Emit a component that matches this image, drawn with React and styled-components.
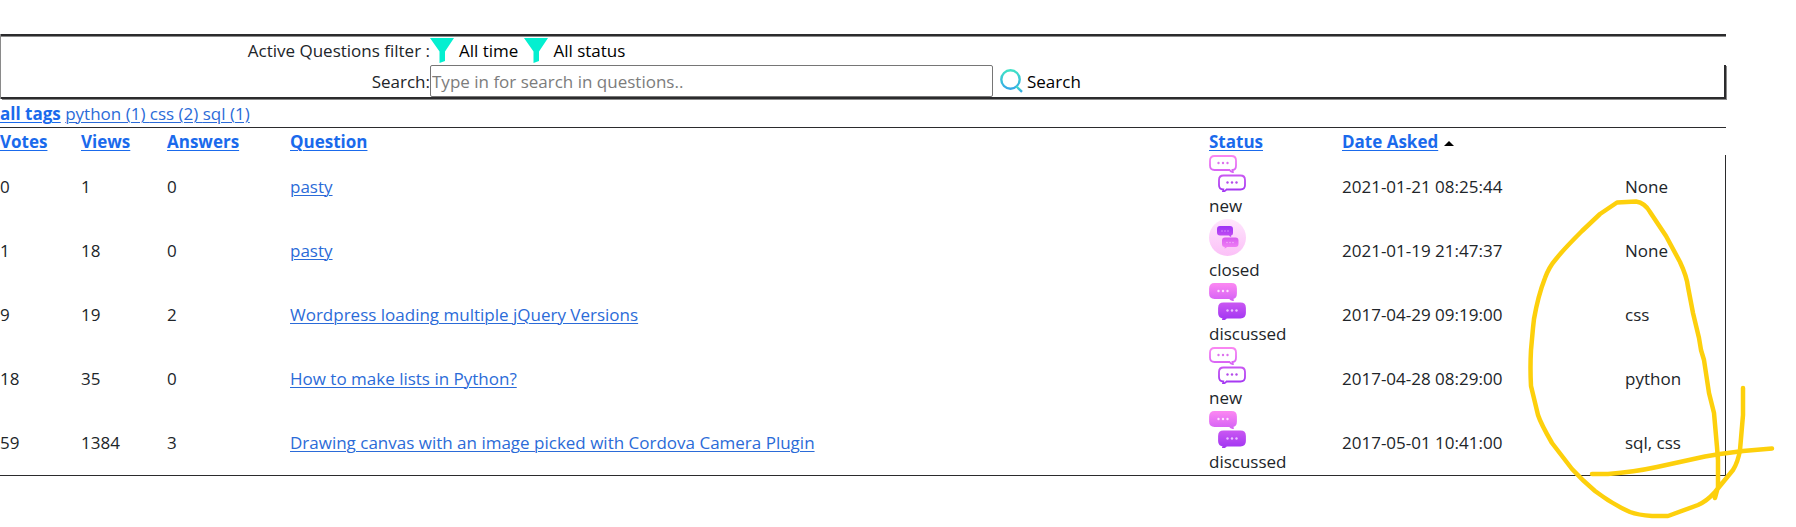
import React from "react";
import styled, { createGlobalStyle } from "styled-components";

const INK = "#2b2b2d";
const EDGE = "#8a8a8a";

const GlobalStyle = createGlobalStyle`
  *, *::before, *::after { box-sizing: border-box; }
  body {
    margin: 0;
    background: #fff;
    color: #212529;
    font: 17px/27px "Open Sans", "Noto Sans", sans-serif;
  }
`;

const Page = styled.main`
  position: relative;
  padding: 34px 70px 50px 0;
  overflow: hidden;
`;

const FilterPanel = styled.form`
  border-left: 1px solid ${EDGE};
`;

const FilterRow = styled.div`
  display: flex;
  align-items: center;
  height: 31px;
  padding: 1px 0 2px;
  border-top: 2px solid ${INK};
  box-shadow: inset 0 1px ${EDGE};
`;

const SearchRow = styled.div`
  display: flex;
  align-items: center;
  border-bottom: 2px solid ${INK};
  border-right: 2px solid ${INK};
  box-shadow: 1px 1px ${EDGE};
`;

const RowLabel = styled.label`
  flex: none;
  width: 429px;
  text-align: right;
`;

const PlainButton = styled.button`
  display: inline-flex;
  align-items: center;
  gap: ${(p) => p.$gap}px;
  margin: 0 6px 0 0;
  padding: 0;
  border: 0;
  background: none;
  color: #000;
  font: inherit;
`;

const SearchInput = styled.input`
  width: 563px;
  height: 32px;
  margin-right: 7px;
  padding: 0 1px;
  border: 1px solid #767676;
  border-radius: 2px;
  font: inherit;
  &::placeholder { color: #7c7c7c; opacity: 1; }
`;

const Link = styled.a`
  color: ${(p) => (p.$bold ? "#1a6aec" : "#2b6bd8")};
  font-weight: ${(p) => (p.$bold ? 700 : 400)};
  text-decoration: underline;
  text-decoration-thickness: 1px;
  text-underline-offset: 2px;
`;

const TagBar = styled.nav`
  padding-top: 1px;
  border-bottom: 1px solid ${INK};
`;

const Table = styled.table`
  width: 100%;
  table-layout: fixed;
  border-collapse: separate;
  border-spacing: 0;
  border-bottom: 1px solid ${INK};
`;

const Col = styled.col`
  width: ${(p) => (p.$width ? `${p.$width}px` : "auto")};
`;

const HeadCell = styled.th`
  height: 27px;
  padding: 0;
  text-align: left;
  white-space: nowrap;
`;

const Cell = styled.td`
  height: 64px;
  padding: ${(p) => (p.$flush ? "0" : "0 0 2px")};
  vertical-align: middle;
  &:last-child { border-right: 1px solid ${INK}; }
`;

const StatusIcon = styled.svg`
  display: block;
  width: 37px;
  height: 37px;
`;

const SortArrow = styled.svg`
  margin-left: 6px;
  vertical-align: middle;
`;

const Annotation = styled.svg`
  position: absolute;
  top: 0;
  right: 0;
  pointer-events: none;
`;

const Funnel = () => (
  <svg width="24" height="25" viewBox="0 0 24 25" aria-hidden="true">
    <path d="M0 0h24L15 13.5V23l-5.500 2V13.500z" fill="#04efd0" />
  </svg>
);

const Magnifier = () => (
  <svg width="23" height="24" viewBox="0 0 23 24" aria-hidden="true">
    <g fill="none" stroke="url(#lens)" strokeWidth="2.400">
      <circle cx="10.500" cy="10.500" r="9.200" />
      <path d="M16.500 17.500l5.500 5.300" />
    </g>
  </svg>
);

const UPPER = "M5.500 1h17Q27 1 27 5.500v5Q27 15 23.500 15l.3 2q-2-.2-3.300-2h-15Q1 15 1 10.500v-5Q1 1 5.500 1z";
const LOWER = "M14.500 20.500h17Q36 20.500 36 25v5Q36 34.500 31.500 34.500h-14q-1.500 1.800-3.500 2l.3-2Q10 34.500 10 30v-5Q10 20.500 14.500 20.500z";

const Dots = ({ x, y, fill }) => (
  <g fill={fill}>
    {[0, 4.5, 9].map((d) => (
      <circle key={d} cx={x + d} cy={y} r="1.200" />
    ))}
  </g>
);

const Bubbles = ({ solid }) => (
  <>
    <path d={UPPER} fill={solid ? "url(#pink)" : "#fff"} stroke="url(#pink)" strokeWidth="1.800" />
    <path d={LOWER} fill={solid ? "url(#violet)" : "#fff"} stroke="url(#violet)" strokeWidth="1.800" />
    <Dots x={9.5} y={8} fill={solid ? "#fde0ff" : "#dd72ee"} />
    <Dots x={18.5} y={27.5} fill={solid ? "#eabfff" : "#b44bea"} />
  </>
);

const ClosedDrawing = () => (
  <>
    <circle cx="18.500" cy="18.500" r="18.500" fill="url(#disc)" />
    <path d="M11 7h10q3 0 3 3v3.500q0 3-2 3l.2 1.500q-1.500-.2-2.200-1.500h-9q-3 0-3-3V10q0-3 3-3z" fill="url(#violet2)" />
    <path d="M16 18.500h10.500q3 0 3 3V25q0 3-3 3H18q-1 1.200-2.500 1.400l.3-1.400q-2.800 0-2.800-3v-3.500q0-3 3-3z" fill="url(#pink2)" />
    <g fill="#e3a2fb">
      <circle cx="13" cy="12" r=".7" /><circle cx="16" cy="12" r=".7" /><circle cx="19" cy="12" r=".7" />
    </g>
    <g fill="#f4b6fa">
      <circle cx="18" cy="23.500" r=".7" /><circle cx="21" cy="23.500" r=".7" /><circle cx="24" cy="23.500" r=".7" />
    </g>
  </>
);

const Gradient = ({ id, from, to }) => (
  <linearGradient id={id} x1="0" y1="0" x2="0" y2="1">
    <stop offset="0" stopColor={from} />
    <stop offset="1" stopColor={to} />
  </linearGradient>
);

const GradientDefs = () => (
  <Annotation width="0" height="0" aria-hidden="true">
    <defs>
      <Gradient id="pink" from="#fa86f2" to="#d662f5" />
      <Gradient id="violet" from="#c856f2" to="#a236f2" />
      <Gradient id="violet2" from="#9d32f5" to="#c44ff2" />
      <Gradient id="pink2" from="#d65cf0" to="#f381f5" />
      <Gradient id="disc" from="#ffe6fd" to="#fbc0f7" />
      <Gradient id="lens" from="#40e2c6" to="#35a9e6" />
    </defs>
  </Annotation>
);

const Status = ({ value }) => (
  <>
    <StatusIcon viewBox="0 0 37 37" aria-hidden="true">
      {value === "closed" ? <ClosedDrawing /> : <Bubbles solid={value === "discussed"} />}
    </StatusIcon>
    {value}
  </>
);

const columns = [
  { title: "Votes", width: 81 },
  { title: "Views", width: 86 },
  { title: "Answers", width: 123 },
  { title: "Question" },
  { title: "Status", width: 133 },
  { title: "Date Asked", width: 283, sorted: true },
  { title: "", width: 101 },
];

const questions = [
  { votes: 0, views: 1, answers: 0, title: "pasty", status: "new", date: "2021-01-21 08:25:44", tags: "None" },
  { votes: 1, views: 18, answers: 0, title: "pasty", status: "closed", date: "2021-01-19 21:47:37", tags: "None" },
  { votes: 9, views: 19, answers: 2, title: "Wordpress loading multiple jQuery Versions", status: "discussed", date: "2017-04-29 09:19:00", tags: "css" },
  { votes: 18, views: 35, answers: 0, title: "How to make lists in Python?", status: "new", date: "2017-04-28 08:29:00", tags: "python" },
  { votes: 59, views: 1384, answers: 3, title: "Drawing canvas with an image picked with Cordova Camera Plugin", status: "discussed", date: "2017-05-01 10:41:00", tags: "sql, css" },
];

export default function App() {
  return (
    <Page>
      <GlobalStyle />
      <GradientDefs />
      <FilterPanel onSubmit={(e) => e.preventDefault()}>
        <FilterRow>
          <RowLabel htmlFor="time-filter">Active Questions filter :</RowLabel>
          <PlainButton id="time-filter" type="button" $gap={5}><Funnel />All time</PlainButton>
          <PlainButton type="button" $gap={5}><Funnel />All status</PlainButton>
        </FilterRow>
        <SearchRow>
          <RowLabel htmlFor="search">Search:</RowLabel>
          <SearchInput id="search" type="text" placeholder="Type in for search in questions.." />
          <PlainButton type="submit" $gap={4}><Magnifier />Search</PlainButton>
        </SearchRow>
      </FilterPanel>
      <TagBar>
        <Link href="#all" $bold>all tags</Link>{" "}
        <Link href="#python">python (1) </Link>
        <Link href="#css">css (2) </Link>
        <Link href="#sql">sql (1)</Link>
      </TagBar>
      <Table>
        <colgroup>
          {columns.map((c) => <Col key={c.title} $width={c.width} />)}
        </colgroup>
        <thead>
          <tr>
            {columns.map((c) => (
              <HeadCell key={c.title} scope="col">
                {c.title && <Link href="#sort" $bold>{c.title}</Link>}
                {c.sorted && (
                  <SortArrow width="10" height="5" viewBox="0 0 10 5" aria-hidden="true">
                    <path d="M0 5L5 0l5 5z" />
                  </SortArrow>
                )}
              </HeadCell>
            ))}
          </tr>
        </thead>
        <tbody>
          {questions.map((q) => (
            <tr key={q.date}>
              <Cell>{q.votes}</Cell>
              <Cell>{q.views}</Cell>
              <Cell>{q.answers}</Cell>
              <Cell><Link href="#question">{q.title}</Link></Cell>
              <Cell $flush><Status value={q.status} /></Cell>
              <Cell>{q.date}</Cell>
              <Cell>{q.tags}</Cell>
            </tr>
          ))}
        </tbody>
      </Table>
      <Annotation width="296" height="527" viewBox="0 0 296 527" aria-hidden="true">
        <g fill="none" stroke="#fdd00c" strokeWidth="4.500" strokeLinecap="round" strokeLinejoin="round">
          <path d="M243 388V415L240 450Q238 462 233 470L215 492Q207 501 198 505L168 516H152Q138 515 130 512Q112 504 95 491Q82 480 72 469L52 443Q41 424 38 415L31 386Q30 368 31 350L33 328L34 319Q38 296 45 278Q49 267 56 259Q63 250 82 231L100 214L117 202.500L136 201.500Q145 203 150 212L166 236L180 262Q187 277 188 287L193 313L199 338L201 350L204 360L209 393L214 413L217 447L218 460V487L215 498" />
          <path d="M92 474H108Q134 472 157 467L205 456.500L220 454L243 451L272 448.500" />
        </g>
      </Annotation>
    </Page>
  );
}
